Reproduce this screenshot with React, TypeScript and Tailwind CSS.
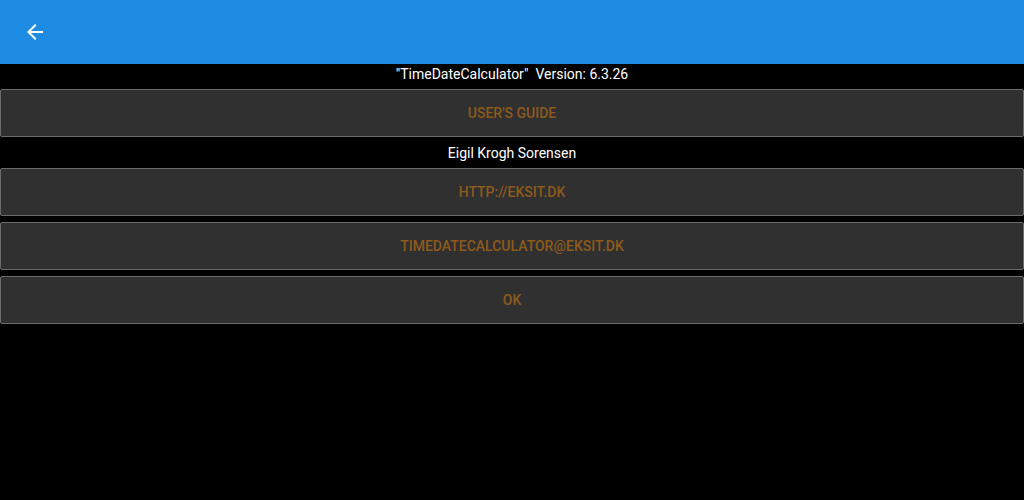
export default function App() {
  const buttons = ["USER'S GUIDE"];
  return (
    <div className="w-[1024px] h-[500px] bg-black font-['Roboto',sans-serif] text-sm">
      <div className="h-16 bg-[#1e8ce3] flex items-center pl-[23px]">
        <svg width="24" height="24" viewBox="0 0 24 24" fill="white">
          <path d="M20 11H7.83l5.59-5.59L12 4l-8 8 8 8 1.41-1.41L7.83 13H20v-2z" />
        </svg>
      </div>
      <p className="h-5 leading-5 text-center text-white">"TimeDateCalculator"&nbsp; Version: 6.3.26</p>
      {buttons.map((b) => (
        <AppButton key={b} label={b} className="mt-[5px]" />
      ))}
      <p className="mt-[6px] h-5 leading-5 text-center text-white">Eigil Krogh Sorensen</p>
      <AppButton label="HTTP://EKSIT.DK" className="mt-[5px]" />
      <AppButton label="TIMEDATECALCULATOR@EKSIT.DK" className="mt-[6px]" />
      <AppButton label="OK" className="mt-[6px]" />
    </div>
  );
}

function AppButton({ label, className }: { label: string; className?: string }) {
  return (
    <button
      className={
        "w-full h-12 flex items-center justify-center bg-[#303030] border border-[#6b6b6b] rounded-[2px] text-[#8e5a1c] font-medium text-sm " +
        (className ?? "")
      }
    >
      {label}
    </button>
  );
}
